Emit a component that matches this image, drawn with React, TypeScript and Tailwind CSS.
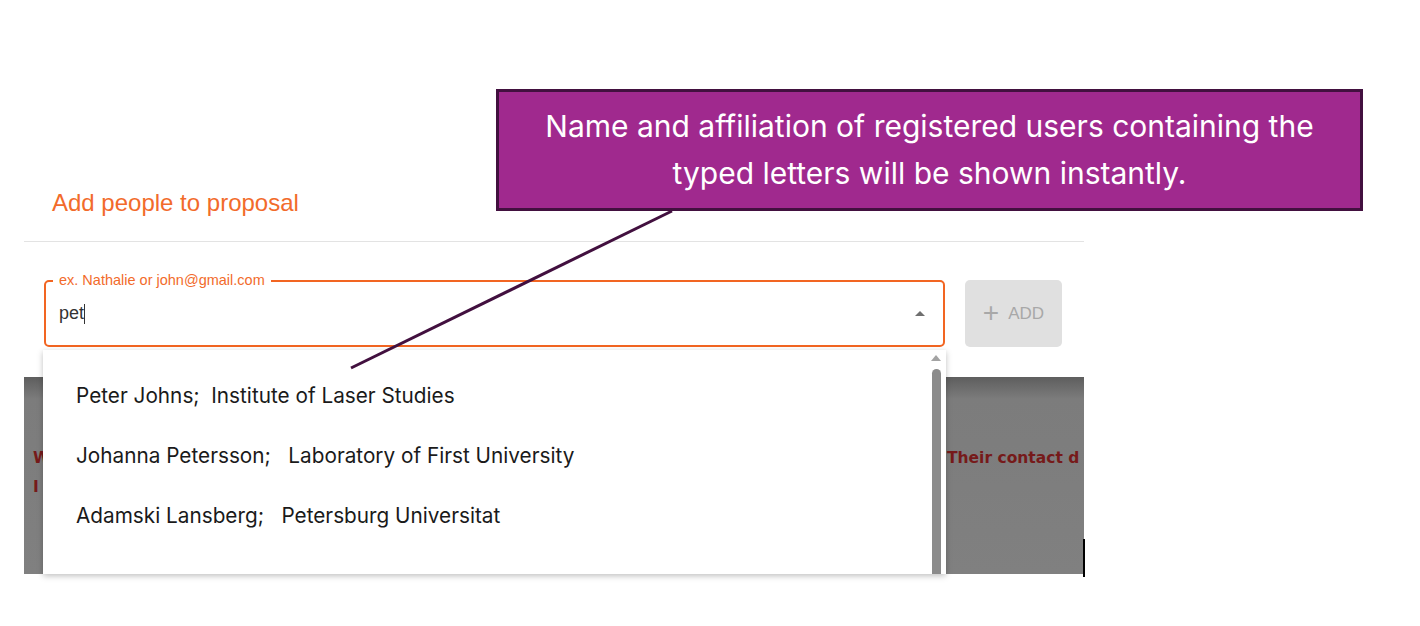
import React from "react";

const results = [
  { name: "Peter Johns;", org: "Institute of Laser Studies", gap: "\u00a0\u00a0" },
  { name: "Johanna Petersson;", org: "Laboratory of First University", gap: "\u00a0\u00a0\u00a0" },
  { name: "Adamski Lansberg;", org: "Petersburg Universitat", gap: "\u00a0\u00a0\u00a0" },
];

const App = () => {
  return (
    <div className="relative w-[1420px] h-[626px] bg-white overflow-hidden">
      <div className="ml-[24px] w-[1060px] pt-[189px]">
        {/* header */}
        <h2 className="pl-[28px] h-[28px] text-[24px] leading-[28px] text-[#f26b2b] font-['Liberation_Sans',sans-serif]">
          Add people to proposal
        </h2>
        <div className="mt-[24px] border-t border-[#e3e3e3]" />

        {/* search row */}
        <div className="mt-[38px] flex items-center font-['Liberation_Sans',sans-serif]">
          <div className="relative ml-[20px] w-[901px] h-[67px] border-2 border-[#f26522] rounded-[5px] flex items-center pl-[13px] pr-[18px]">
            <span className="absolute -top-[10px] left-[7px] px-[6px] bg-white text-[14.5px] leading-[17px] text-[#f26b2b]">
              ex. Nathalie or john@gmail.com
            </span>
            <span className="text-[18px] text-[#333]">pet</span>
            <span className="w-px h-[20px] bg-[#333]" />
            <span className="ml-auto w-0 h-0 border-l-[5px] border-r-[5px] border-b-[5px] border-l-transparent border-r-transparent border-b-[#6f6f6f]" />
          </div>
          <button className="ml-[20px] w-[97px] h-[67px] rounded-[5px] bg-[#e0e0e0] flex items-center justify-center gap-[9px] text-[#a8a8a8]">
            <span className="text-[28px] font-light leading-none -mt-[2px]">+</span>
            <span className="text-[17px]">ADD</span>
          </button>
        </div>

        {/* page behind the menu */}
        <div className="mt-[30px] h-[197px] overflow-hidden bg-[linear-gradient(to_bottom,#5e5e5e_0px,#7c7c7c_22px,#808080_100%)] pt-[67px] pl-[9px] font-['DejaVu_Sans',sans-serif] font-bold text-[15.5px] leading-[29px] text-[#761a1a]">
          <div className="flex whitespace-nowrap">
            <span className="w-[914px] shrink-0">W</span>
            <span>Their contact d</span>
          </div>
          <div>I</div>
        </div>
      </div>

      <div className="absolute left-[1083px] top-[539px] w-[2px] h-[38px] bg-black" />

      {/* autocomplete menu */}
      <div className="absolute left-[43px] top-[350px] w-[903px] h-[224px] bg-white shadow-[0_2px_6px_rgba(0,0,0,0.25)] flex">
        <ul className="flex-1 pt-[16px] pl-[33px] font-['Inter',sans-serif] text-[20.75px] text-[#1a1a1a]">
          {results.map((r) => (
            <li key={r.name} className="h-[60px] flex items-center whitespace-nowrap">
              {r.name}
              {r.gap}
              {r.org}
            </li>
          ))}
        </ul>
        <div className="w-[12px] mr-[4px] flex flex-col items-center pt-[5px]">
          <span className="w-0 h-0 border-l-[5px] border-r-[5px] border-b-[6px] border-l-transparent border-r-transparent border-b-[#a3a3a3]" />
          <div className="mt-[8px] w-[9px] flex-1 rounded-t-full bg-[#8b8b8b]" />
        </div>
      </div>

      {/* annotation */}
      <div className="absolute left-[496px] top-[89px] w-[867px] h-[122px] border-[3px] border-[#42103f] bg-[#a0298e] flex items-center justify-center text-center text-white font-['Inter',sans-serif] text-[30px] leading-[47px]">
        <p>
          Name and affiliation of registered users containing the
          <br />
          typed letters will be shown instantly.
        </p>
      </div>
      <svg className="absolute left-0 top-0 pointer-events-none" width="1420" height="626">
        <line x1="672" y1="211" x2="351" y2="368" stroke="#42103f" strokeWidth="3" />
      </svg>
    </div>
  );
};

export default App;
